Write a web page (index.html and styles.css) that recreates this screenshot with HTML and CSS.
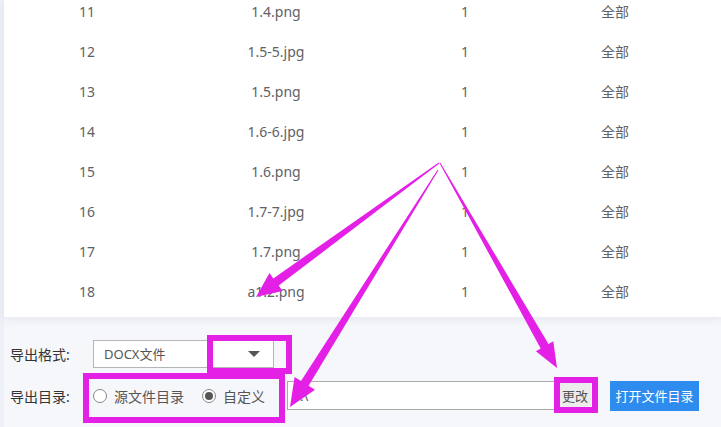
FILE: index.html
```html
<!DOCTYPE html>
<html lang="zh-CN">

<head>
    <meta charset="utf-8">
    <meta name="viewport" content="width=device-width, initial-scale=1.0">
    <title>导出设置</title>
    <link rel="stylesheet" href="styles.css">
</head>

<body>
    <div class="side"></div>

    <main class="page">
        <section class="card">
            <div class="liste">
                <div class="raekke"><span>11</span><span>1.4.png</span><span>1</span><span>全部</span></div>
                <div class="raekke"><span>12</span><span>1.5-5.jpg</span><span>1</span><span>全部</span></div>
                <div class="raekke"><span>13</span><span>1.5.png</span><span>1</span><span>全部</span></div>
                <div class="raekke"><span>14</span><span>1.6-6.jpg</span><span>1</span><span>全部</span></div>
                <div class="raekke"><span>15</span><span>1.6.png</span><span>1</span><span>全部</span></div>
                <div class="raekke"><span>16</span><span>1.7-7.jpg</span><span>1</span><span>全部</span></div>
                <div class="raekke"><span>17</span><span>1.7.png</span><span>1</span><span>全部</span></div>
                <div class="raekke"><span>18</span><span>a1.2.png</span><span>1</span><span>全部</span></div>
            </div>
        </section>

        <section class="indstil">
            <div class="linje">
                <label class="etiket">导出格式:</label>
                <div class="vaelg">
                    <span>DOCX文件</span>
                    <span class="pil"></span>
                </div>
            </div>
            <div class="linje">
                <label class="etiket">导出目录:</label>
                <div class="radio">
                    <span class="prik"></span>源文件目录
                </div>
                <div class="radio valgt">
                    <span class="prik"></span>自定义
                </div>
                <div class="sti">:\</div>
                <button class="skift">更改</button>
                <button class="aabn">打开文件目录</button>
            </div>
        </section>
    </main>

    <!-- markeringer -->
    <svg class="noter" width="721" height="427" viewBox="0 0 721 427">
        <g fill="none" stroke="#e41fe6" stroke-width="6">
            <rect x="210" y="338" width="79" height="33" />
            <rect x="86" y="376" width="196" height="44" />
            <rect x="557" y="380" width="38" height="30" />
        </g>
        <g fill="#e41fe6">
            <polygon points="439.3,163.4 278.7,285.6 282.5,290.9 256,297 269.5,273.1 273.3,278.4 438.7,162.6" />
            <polygon points="438.4,170.3 308.6,385.7 315,389.7 290,407 294.6,376.9 301,380.9 437.6,169.7" />
            <polygon points="440.4,162.8 548.5,344.1 553.3,341.3 557,368 535.9,351.3 540.7,348.5 439.6,163.2" />
        </g>
    </svg>
</body>

</html>
```

FILE: styles.css
```css
body {
    margin: 0;
    width: 721px;
    height: 427px;
    overflow: hidden;
    position: relative;
    display: flex;
    background: #f6f7fa;
    font-family: "Noto Sans", "Noto Sans CJK SC", sans-serif;
}

.side {
    width: 4px;
    background: #eef0f7;
}

.page {
    flex: 1;
    display: flex;
    flex-direction: column;
}

.card {
    height: 317px;
    overflow: hidden;
    background: #fff;
    box-shadow: 0 3px 8px rgba(40, 60, 110, 0.08);
}

.liste {
    margin-top: -9px;
}

.raekke {
    display: grid;
    grid-template-columns: 166px 212px 166px 134px 1fr;
    height: 40px;
    align-items: center;
    text-align: center;
    font-size: 14px;
    color: #606266;
}

.indstil {
    display: flex;
    flex-direction: column;
    padding: 22px 0 0 6px;
    gap: 13px;
}

.linje {
    display: flex;
    align-items: center;
    height: 29px;
}

.etiket {
    width: 83px;
    font-size: 14px;
    color: #333;
}

.vaelg {
    width: 156px;
    height: 26px;
    border: 1px solid #b5b5b5;
    background: #fff;
    display: flex;
    align-items: center;
    justify-content: space-between;
    padding: 0 13px 0 10px;
    font-size: 13px;
    color: #555;
}

.pil {
    width: 0;
    height: 0;
    border-left: 6px solid transparent;
    border-right: 6px solid transparent;
    border-top: 6px solid #555;
}

.radio {
    display: flex;
    align-items: center;
    font-size: 14px;
    color: #555;
    margin-right: 18px;
}

.prik {
    width: 12px;
    height: 12px;
    border: 1px solid #888;
    border-radius: 50%;
    background: #fff;
    margin-right: 7px;
    position: relative;
}

.valgt .prik::after {
    content: "";
    position: absolute;
    left: 2px;
    top: 2px;
    width: 8px;
    height: 8px;
    border-radius: 50%;
    background: #555;
}

.valgt {
    margin-right: 22px;
}

.sti {
    width: 254px;
    height: 27px;
    border: 1px solid #aaa;
    background: #fff;
    padding-left: 12px;
    display: flex;
    align-items: center;
    font-size: 13px;
    color: #555;
}

.skift {
    margin-left: 4px;
    height: 27px;
    padding: 0 3px;
    border: none;
    background: #ececec;
    font-family: inherit;
    font-size: 13px;
    color: #555;
}

.aabn {
    margin-left: 19px;
    width: 89px;
    height: 30px;
    padding: 0;
    border: none;
    background: #2f8cef;
    color: #fff;
    white-space: nowrap;
    font-family: inherit;
    font-size: 13px;
}

.noter {
    position: absolute;
    left: 0;
    top: 0;
    pointer-events: none;
}
```
